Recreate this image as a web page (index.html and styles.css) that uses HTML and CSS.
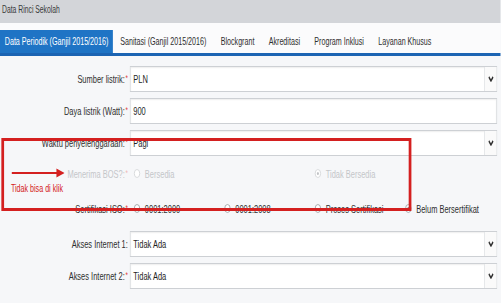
FILE: index.html
```html
<!DOCTYPE html>
<html lang="id">
<head>
<meta charset="utf-8">
<title>Data Rinci Sekolah</title>
<link rel="stylesheet" href="styles.css">
</head>
<body>
<div class="frame">
<div class="page">
  <div class="titlebar">Data Rinci Sekolah</div>
  <div class="tabs">
    <div class="tab active">Data Periodik (Ganjil 2015/2016)</div>
    <div class="tab">Sanitasi (Ganjil 2015/2016)</div>
    <div class="tab">Blockgrant</div>
    <div class="tab">Akreditasi</div>
    <div class="tab">Program Inklusi</div>
    <div class="tab">Layanan Khusus</div>
  </div>
  <div class="form">
    <div class="row field">
      <label class="lbl">Sumber listrik:<span class="req">*</span></label>
      <div class="box"><span class="val">PLN</span><span class="arrow"><svg width="8" height="6" viewBox="0 0 8 6"><polyline points="0.8,0.8 4,4.8 7.2,0.8" fill="none" stroke="#333" stroke-width="2"/></svg></span></div>
    </div>
    <div class="row field">
      <label class="lbl">Daya listrik (Watt):<span class="req">*</span></label>
      <div class="box"><span class="val">900</span></div>
    </div>
    <div class="row field">
      <label class="lbl">Waktu penyelenggaraan:<span class="req">*</span></label>
      <div class="box"><span class="val">Pagi</span><span class="arrow"><svg width="8" height="6" viewBox="0 0 8 6"><polyline points="0.8,0.8 4,4.8 7.2,0.8" fill="none" stroke="#333" stroke-width="2"/></svg></span></div>
    </div>
    <div class="row radios disabled">
      <label class="lbl">Menerima BOS?:<span class="req">*</span></label>
      <div class="opts">
        <span class="opt"><span class="dot"></span>Bersedia</span>
        <span class="opt"></span>
        <span class="opt"><span class="dot on"></span>Tidak Bersedia</span>
        <span class="opt"></span>
      </div>
    </div>
    <div class="row radios">
      <label class="lbl">Sertifikasi ISO:<span class="req">*</span></label>
      <div class="opts">
        <span class="opt"><span class="dot"></span>9001:2000</span>
        <span class="opt"><span class="dot"></span>9001:2008</span>
        <span class="opt"><span class="dot"></span>Proses Sertifikasi</span>
        <span class="opt"><span class="dot on"></span>Belum Bersertifikat</span>
      </div>
    </div>
    <div class="row field gap-top">
      <label class="lbl">Akses Internet 1:</label>
      <div class="box"><span class="val">Tidak Ada</span><span class="arrow"><svg width="8" height="6" viewBox="0 0 8 6"><polyline points="0.8,0.8 4,4.8 7.2,0.8" fill="none" stroke="#333" stroke-width="2"/></svg></span></div>
    </div>
    <div class="row field">
      <label class="lbl">Akses Internet 2:<span class="req">*</span></label>
      <div class="box"><span class="val">Tidak Ada</span><span class="arrow"><svg width="8" height="6" viewBox="0 0 8 6"><polyline points="0.8,0.8 4,4.8 7.2,0.8" fill="none" stroke="#333" stroke-width="2"/></svg></span></div>
    </div>
  </div>

  <div class="note-box"></div>
  <svg class="note-arrow" width="78" height="10" viewBox="0 0 78 10"><line x1="0" y1="5" x2="68" y2="5" stroke="#d42020" stroke-width="2"/><polygon points="66,0.5 78,5 66,9.5" fill="#d42020"/></svg>
  <div class="note-text">Tidak bisa di klik</div>
</div>
</div>
</body>
</html>
```
FILE: styles.css
```css
html, body {
  margin: 0;
  padding: 0;
  overflow: hidden;
  background: #f6f7f9;
}

.frame {
  width: 501px;
  height: 303px;
  overflow: hidden;
}

.page {
  position: relative;
  width: 736px;
  height: 303px;
  transform: scaleX(0.68);
  transform-origin: 0 0;
  font-family: "Liberation Sans", Arial, sans-serif;
  color: #333;
  background: #f6f7f9;
}

.titlebar {
  height: 23px;
  line-height: 19px;
  padding-left: 3px;
  font-size: 10px;
  color: #3a3a3a;
  background: #d3d5d9;
}

.tabs {
  display: flex;
  border-top: 7px solid #fbfbfc;
  background: #fbfbfc;
  border-bottom: 3px solid #1c64b3;
  height: 23px;
}

.tab {
  height: 23px;
  line-height: 23px;
  padding: 0 10.5px;
  font-size: 10.5px;
  color: #2e2e2e;
  white-space: nowrap;
}

.tab.active {
  padding: 0 7px;
  background: #1f74c5;
  color: #fff;
}

.form {
  display: flex;
  flex-direction: column;
  padding: 10px 5px 0 0;
}

.row {
  display: grid;
  grid-template-columns: 188px 1fr;
  column-gap: 3px;
  align-items: center;
}

.row.field {
  height: 26px;
  margin-bottom: 6px;
}

.row.field:nth-child(3) {
  margin-bottom: 0;
}

.row.radios {
  height: 35px;
}

.row.gap-top {
  margin-top: 5px;
}

.lbl {
  text-align: right;
  font-size: 11px;
  color: #2e2e2e;
  white-space: nowrap;
}

.req {
  color: #e03a3a;
  font-size: 9px;
  vertical-align: 2px;
  margin-left: 1px;
}

.box {
  display: flex;
  align-items: stretch;
  height: 26px;
  box-sizing: border-box;
  border: 1px solid #cdd0d4;
  background: #fff;
  box-shadow: inset 0 1px 2px rgba(0, 0, 0, 0.07);
}

.val {
  flex: 1;
  line-height: 24px;
  padding-left: 4px;
  font-size: 11px;
  color: #1e1e1e;
}

.arrow {
  width: 17px;
  display: flex;
  align-items: center;
  justify-content: center;
  border-left: 1px solid #dcdfe2;
  background: #fafafa;
}

.opts {
  display: grid;
  grid-template-columns: repeat(4, 133px);
  padding-left: 6px;
}

.opt {
  display: flex;
  align-items: center;
  gap: 7px;
  font-size: 11px;
  color: #2e2e2e;
  white-space: nowrap;
}

.dot {
  position: relative;
  width: 9px;
  height: 9px;
  box-sizing: border-box;
  border: 1px solid #9a9da1;
  border-radius: 50%;
  background: #fff;
}

.dot.on::after {
  content: "";
  position: absolute;
  left: 2px;
  top: 2px;
  width: 3px;
  height: 3px;
  border-radius: 50%;
  background: #777;
}

.disabled .lbl,
.disabled .opt {
  color: #c4c6c9;
}

.disabled .req {
  color: #efb8b8;
}

.disabled .dot {
  border-color: #d3d5d8;
}

.disabled .dot.on::after {
  background: #c0c2c5;
}

.note-box {
  position: absolute;
  left: 1.5px;
  top: 138px;
  width: 603px;
  height: 73px;
  box-sizing: border-box;
  border: 3px solid #d42020;
  border-left-width: 4.4px;
  border-right-width: 4.4px;
}

.note-arrow {
  position: absolute;
  left: 17px;
  top: 168px;
}

.note-text {
  position: absolute;
  left: 16px;
  top: 182px;
  font-size: 10.5px;
  color: #d42020;
  white-space: nowrap;
}
```
